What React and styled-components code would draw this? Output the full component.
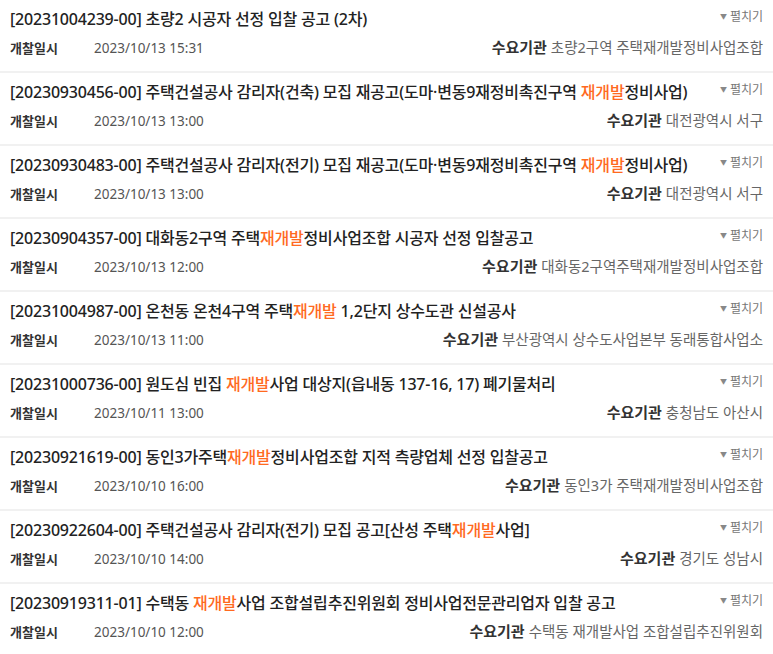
import styled, { createGlobalStyle } from 'styled-components';

const GlobalStyle = createGlobalStyle`
  body {
    margin: 0;
    background: #fff;
    font-family: "Noto Sans", "Noto Sans CJK KR", sans-serif;
  }
`

const List = styled.ul`
  list-style: none;
  margin: 0;
  padding: 0;
  width: 773px;
`

const Row = styled.li`
  box-sizing: border-box;
  height: 73px;
  padding: 7px 10px 0 10px;
  border-bottom: 2px solid #f1f1f1;
`

const TopLine = styled.div`
  display: flex;
  align-items: flex-start;
  justify-content: space-between;
`

const Title = styled.div`
  font-size: 16px;
  line-height: 24px;
  font-weight: 500;
  color: #222;
  white-space: nowrap;
  letter-spacing: -0.2px;
`

const Mark = styled.span`
  color: #ff6a1f;
`

const Toggle = styled.button`
  border: 0;
  background: none;
  padding: 0;
  margin-top: 2px;
  font-family: inherit;
  font-size: 12px;
  line-height: 16px;
  color: #777;
  display: flex;
  align-items: center;
  gap: 3px;
  cursor: pointer;
`

const Caret = styled.span`
  font-size: 7px;
  color: #888;
`

const MetaLine = styled.div`
  display: flex;
  justify-content: space-between;
  align-items: baseline;
  margin-top: 6px;
  line-height: 20px;
`

const DateBlock = styled.div`
  display: flex;
  align-items: baseline;
`

const Label = styled.span`
  font-size: ${p => p.$size || '13px'};
  font-weight: 700;
  color: #333;
  width: ${p => p.$w || 'auto'};
  margin-right: ${p => p.$gap || '0'};
`

const Value = styled.span`
  font-size: ${p => p.$size || '14px'};
  color: ${p => p.$dim ? '#666' : '#555'};
`

const items = [
  { no: '20231004239-00', title: ['초량2 시공자 선정 입찰 공고 (2차)'], date: '2023/10/13 15:31', org: '초량2구역 주택재개발정비사업조합' },
  { no: '20230930456-00', title: ['주택건설공사 감리자(건축) 모집 재공고(도마·변동9재정비촉진구역 ', '재개발', '정비사업)'], date: '2023/10/13 13:00', org: '대전광역시 서구' },
  { no: '20230930483-00', title: ['주택건설공사 감리자(전기) 모집 재공고(도마·변동9재정비촉진구역 ', '재개발', '정비사업)'], date: '2023/10/13 13:00', org: '대전광역시 서구' },
  { no: '20230904357-00', title: ['대화동2구역 주택', '재개발', '정비사업조합 시공자 선정 입찰공고'], date: '2023/10/13 12:00', org: '대화동2구역주택재개발정비사업조합' },
  { no: '20231004987-00', title: ['온천동 온천4구역 주택', '재개발', ' 1,2단지 상수도관 신설공사'], date: '2023/10/13 11:00', org: '부산광역시 상수도사업본부 동래통합사업소' },
  { no: '20231000736-00', title: ['원도심 빈집 ', '재개발', '사업 대상지(읍내동 137-16, 17) 폐기물처리'], date: '2023/10/11 13:00', org: '충청남도 아산시' },
  { no: '20230921619-00', title: ['동인3가주택', '재개발', '정비사업조합 지적 측량업체 선정 입찰공고'], date: '2023/10/10 16:00', org: '동인3가 주택재개발정비사업조합' },
  { no: '20230922604-00', title: ['주택건설공사 감리자(전기) 모집 공고[산성 주택', '재개발', '사업]'], date: '2023/10/10 14:00', org: '경기도 성남시' },
  { no: '20230919311-01', title: ['수택동 ', '재개발', '사업 조합설립추진위원회 정비사업전문관리업자 입찰 공고'], date: '2023/10/10 12:00', org: '수택동 재개발사업 조합설립추진위원회' },
]

const App = () => {
  return (
    <>
      <GlobalStyle />
      <List>
        {items.map(item => (
          <Row key={item.no}>
            <TopLine>
              <Title>
                [{item.no}]{' '}
                {item.title.map((part, i) =>
                  i % 2 === 1 ? <Mark key={i}>{part}</Mark> : <span key={i}>{part}</span>
                )}
              </Title>
              <Toggle>
                <Caret>▼</Caret>펼치기
              </Toggle>
            </TopLine>
            <MetaLine>
              <DateBlock>
                <Label $w="84px">개찰일시</Label>
                <Value $size="13.5px">{item.date}</Value>
              </DateBlock>
              <div>
                <Label $size="15px" $gap="4px">수요기관</Label>
                <Value $dim $size="14.5px">{item.org}</Value>
              </div>
            </MetaLine>
          </Row>
        ))}
      </List>
    </>
  )
}

export default App
